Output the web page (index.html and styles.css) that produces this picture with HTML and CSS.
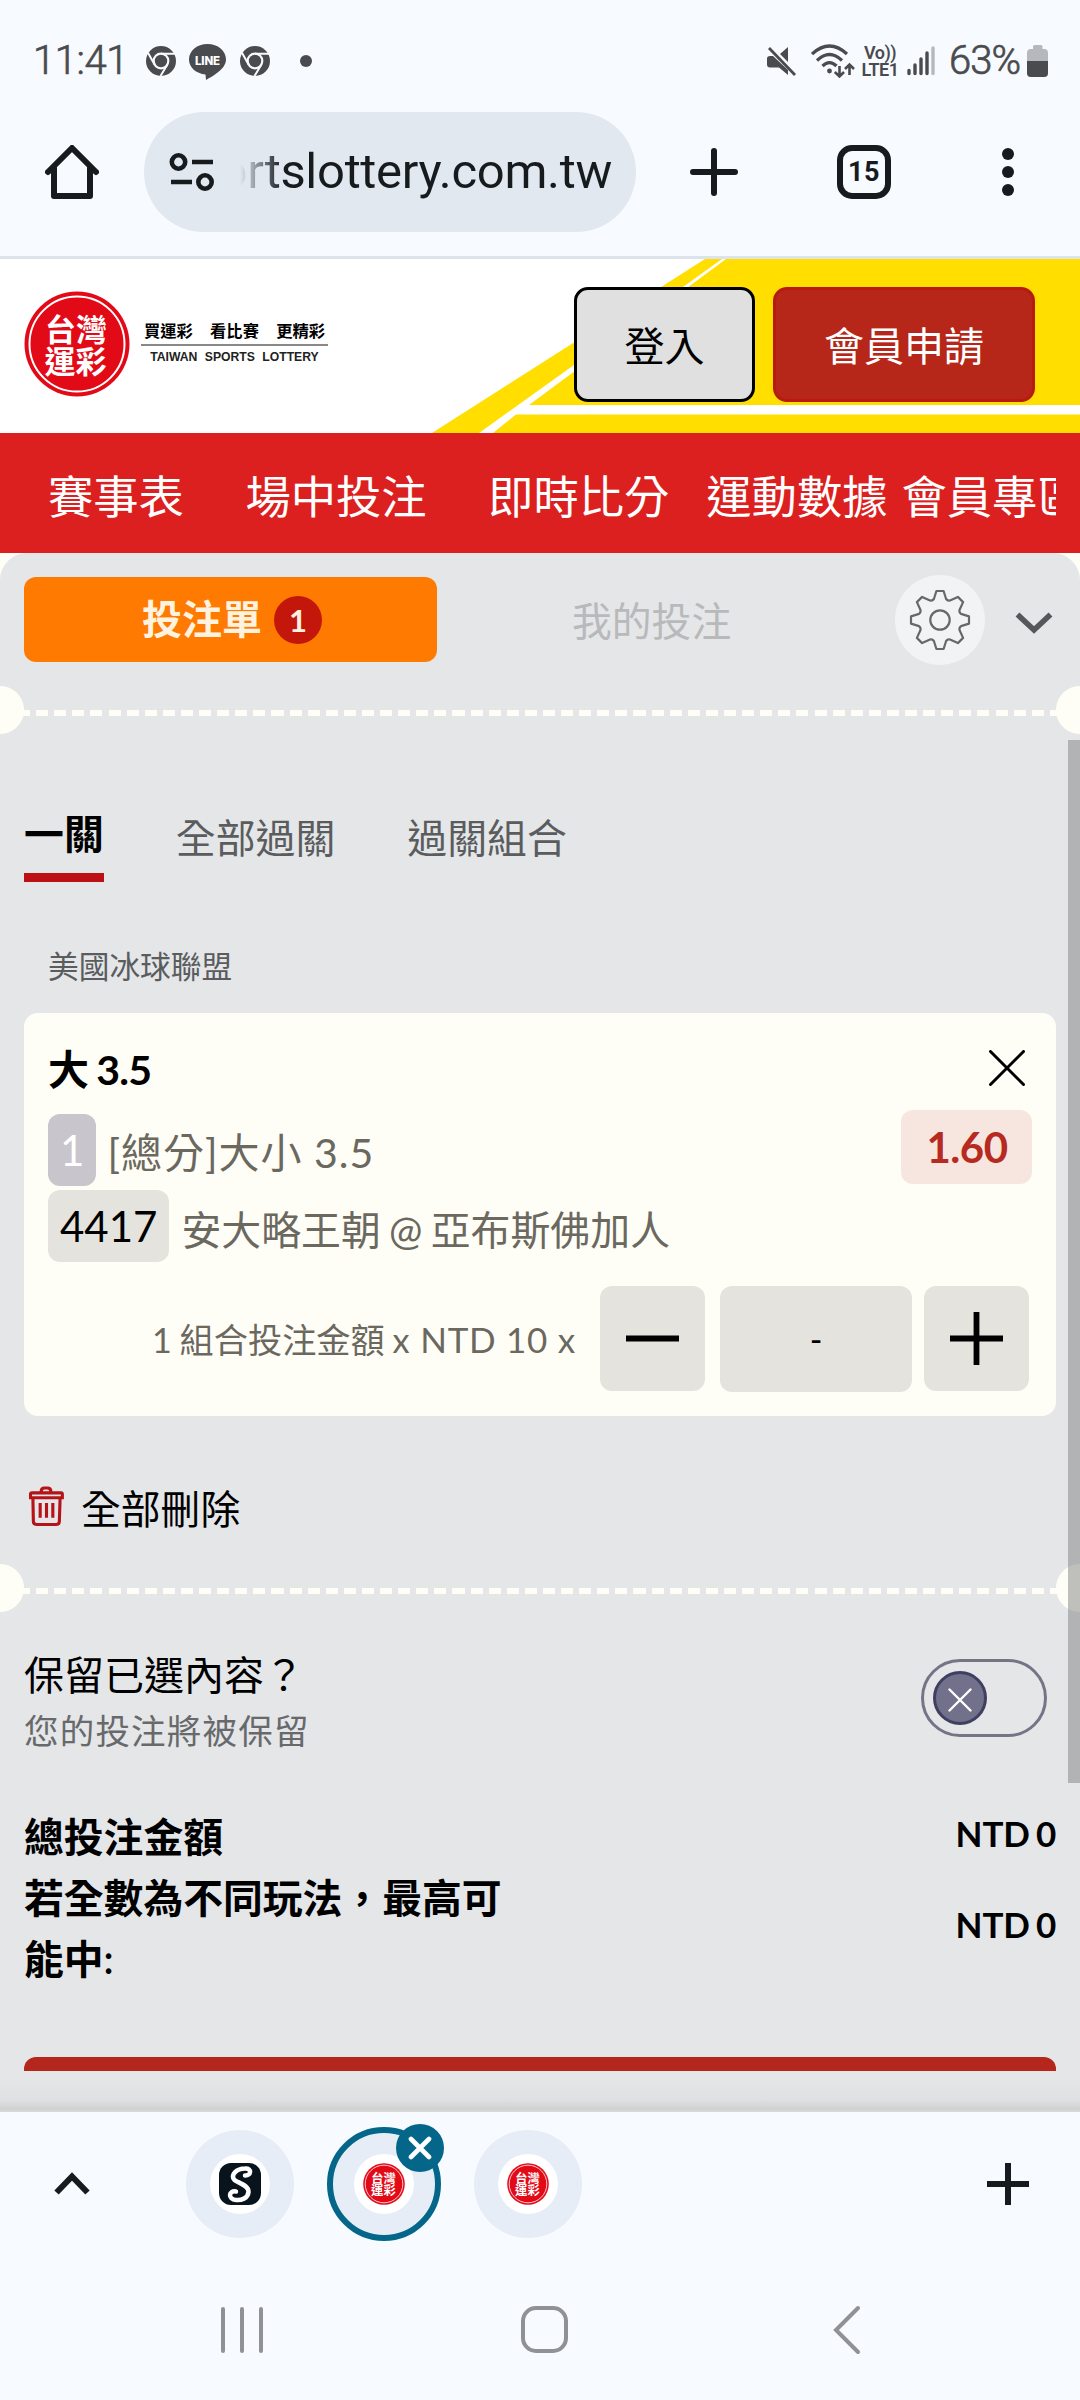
FILE: index.html
```html
<!DOCTYPE html>
<html lang="zh-Hant">
<head>
<meta charset="utf-8">
<title>台灣運彩</title>
<link rel="stylesheet" href="styles.css">
</head>
<body>
<svg class="defs" width="0" height="0" aria-hidden="true">
  <symbol id="chrome" viewBox="0 0 30 30">
    <circle cx="15" cy="15" r="15" fill="#4a4b4e"/>
    <circle cx="15" cy="15" r="8.4" fill="#f7faff"/>
    <circle cx="15" cy="15" r="6.2" fill="#4a4b4e"/>
    <path d="M15 7.7H29M8.7 18.7L1.8 6.500M21.3 18.7L14.5 30" stroke="#f7faff" stroke-width="2" fill="none"/>
  </symbol>
  <symbol id="seal" viewBox="0 0 106 106">
    <circle cx="53" cy="53" r="52.5" fill="#e30a17"/>
    <circle cx="53" cy="53" r="47.5" fill="none" stroke="#fff" stroke-width="2"/>
    <g fill="#fff" font-size="31" font-weight="700" font-family="'Noto Sans CJK TC',sans-serif">
      <text x="21" y="50">台灣</text>
      <text x="20.500" y="82">運彩</text>
    </g>
  </symbol>
</svg>

<header class="status">
  <span class="clock">11:41</span>
  <svg class="s-chrome" width="30" height="30"><use href="#chrome"/></svg>
  <svg class="s-line" width="37" height="36" viewBox="0 0 37 36">
    <path d="M18.5 0C8 0 0 6.800 0 15.500C0 23.500 7 29.500 16.500 30.500L17 36C24 32 37 25 37 15.500C37 6.800 29 0 18.500 0Z" fill="#4a4b4e"/>
    <text x="18.500" y="20.500" text-anchor="middle" font-family="Inter,sans-serif" font-weight="800" font-size="11.500" fill="#fff" textLength="25">LINE</text>
  </svg>
  <svg class="s-chrome2" width="30" height="30"><use href="#chrome"/></svg>
  <i class="s-dot"></i>
  <div class="s-right">
    <svg width="30" height="31" viewBox="0 0 30 31">
      <path d="M0 12.500Q0 10 3 10H6L21 24V29L12 21.500H3Q0 21.500 0 18.500ZM21 1V16L13 8Z" fill="#4a4b4e"/>
      <path d="M2 2L28 29" stroke="#4a4b4e" stroke-width="2.800"/>
    </svg>
    <svg class="s-wifi" width="44" height="35" viewBox="0 0 44 35">
      <g fill="none" stroke="#4a4b4e" stroke-width="3.200"><path d="M1 10Q18.500-6 36 10M6 16.500Q18.500 4.500 31 16.500M11.500 22Q18.500 15 25.500 22"/><path d="M28.500 22V32M23.800 28L28.500 32.500L33 28M38.500 31V21M34 25L38.500 20.500L43 25" stroke-width="2.600"/></g>
      <circle cx="18.500" cy="27" r="2.400" fill="#4a4b4e"/>
    </svg>
    <div class="s-lte"><b>Vo))</b><b>LTE1</b></div>
    <svg class="s-signal" width="28" height="30" viewBox="0 0 28 30" stroke-width="3.400" stroke-linecap="round" stroke="#4a4b4e">
      <path d="M2 24.500V27.500M8 19V27.500M14 13V27.500M20 7V27.500"/><path d="M26 2V27.500" stroke="#b5b8bc"/>
    </svg>
    <span class="pct">63%</span>
    <svg class="s-batt" width="21" height="32" viewBox="0 0 21 32">
      <path d="M6 1.500Q6 0 7.500 0H14Q15.500 0 15.500 1.500V4H18Q21 4.500 21 8V28Q21 32 17 32H4Q0 32 0 28V8Q0 4.500 3 4H6Z" fill="#b5b8bc"/>
      <path d="M0 16H21V28Q21 32 17 32H4Q0 32 0 28Z" fill="#4a4b4e"/>
    </svg>
  </div>
</header>

<nav class="toolbar">
  <svg class="home" width="54" height="54" viewBox="0 0 54 54" fill="none" stroke="#171b1e" stroke-width="6" stroke-linecap="round" stroke-linejoin="round">
    <path d="M3 27L27 3L51 27M9 23V51H45V23"/>
  </svg>
  <div class="url">
    <svg width="46" height="40" viewBox="0 0 46 40" fill="none" stroke="#171b1e" stroke-width="4.600">
      <circle cx="9.500" cy="10" r="6.700"/><path d="M23 10H44M2 30H23"/><circle cx="36" cy="30" r="6.700"/>
    </svg>
    <div class="address"><span>sportslottery.com.tw</span></div>
  </div>
  <svg class="add" width="48" height="48" viewBox="0 0 48 48" stroke="#171b1e" stroke-width="6" stroke-linecap="round"><path d="M24 3V45M3 24H45"/></svg>
  <div class="count">15</div>
  <div class="more"><i></i><i></i><i></i></div>
</nav>

<section class="brand">
  <svg class="stripes" width="1080" height="174" viewBox="0 259 1080 174" fill="#ffde00">
    <path d="M705 259H722L479 433H432ZM726 259H1080V405H529ZM516 414.500H1080V433H493Z"/>
  </svg>
  <svg class="seal" width="106" height="106"><use href="#seal"/></svg>
  <div class="slogan">
    <p class="zh"><span>買運彩</span><span>看比賽</span><span>更精彩</span></p>
    <p class="en">TAIWAN SPORTS LOTTERY</p>
  </div>
  <a class="btn login">登入</a>
  <a class="btn join">會員申請</a>
</section>

<nav class="menu"><div class="menu-in">
  <a class="m1">賽事表</a><a class="m2">場中投注</a><a class="m3">即時比分</a><a class="m4">運動數據</a><a>會員專區</a>
</div></nav>

<main class="sheet">
  <div class="slip">
    <div class="slip-tabs">
      <div class="tab-on">投注單<span class="badge">1</span></div>
      <div class="tab-off">我的投注</div>
      <div class="gear">
        <svg width="62" height="62" viewBox="-31 -31 62 62" fill="none" stroke="#666869" stroke-width="2.200" stroke-linejoin="round">
          <circle r="9.700"/>
          <path d="M-3.600-29H3.600L6.100-21Q7.500-19 10-19.500L17.900-23.100L23.100-17.900L19.500-10Q19-7.500 21-6.100L29-3.600V3.600L21 6.100Q19 7.500 19.500 10L23.100 17.900L17.900 23.100L10 19.500Q7.500 19 6.100 21L3.600 29H-3.600L-6.100 21Q-7.500 19-10 19.500L-17.900 23.100L-23.100 17.900L-19.500 10Q-19 7.500-21 6.100L-29 3.600V-3.600L-21-6.100Q-19-7.500-19.500-10L-23.100-17.900L-17.900-23.100L-10-19.500Q-7.500-19-6.100-21Z"/>
        </svg>
      </div>
      <svg class="fold" width="38" height="24" viewBox="0 0 38 24" fill="none" stroke="#55575a" stroke-width="5.600"><path d="M2.500 2.500L19 18L35.500 2.500"/></svg>
    </div>
    <div class="tear"></div>

    <div class="scroll">
      <div class="modes"><span class="on">一關</span><span>全部過關</span><span>過關組合</span></div>
      <p class="league">美國冰球聯盟</p>
      <article class="card">
        <div class="row pick"><h3>大 3.5</h3>
          <svg width="36" height="36" viewBox="0 0 36 36" stroke="#000" stroke-width="3" stroke-linecap="round"><path d="M1.500 1.500L34.500 34.500M34.500 1.500L1.500 34.500"/></svg></div>
        <div class="row market"><span class="tag grey">1</span><span class="desc">[總分]大小 3.5</span><b class="odds">1.60</b></div>
        <div class="row match"><span class="tag">4417</span><span class="teams">安大略王朝 @ 亞布斯佛加人</span></div>
        <div class="row stake">
          <span class="unit">1 組合投注金額 x <em>NTD 10 x</em></span>
          <span class="step"><svg width="53" height="53" viewBox="0 0 53 53" stroke="#000" stroke-width="5.800"><path d="M0 26.500H53"/></svg></span>
          <span class="amount">-</span>
          <span class="step"><svg width="53" height="53" viewBox="0 0 53 53" stroke="#000" stroke-width="5.800"><path d="M0 26.500H53M26.500 0V53"/></svg></span>
        </div>
      </article>
      <div class="clear">
        <svg width="35" height="41" viewBox="0 0 36 41" fill="none" stroke="#b51317" stroke-width="3.200">
          <path d="M12.500 6V5Q12.500 1.500 16 1.500H19Q22.500 1.500 22.500 5V6M3 6.500H33Q34.300 6.500 34.300 8V11.500H1.500V8Q1.500 6.500 3 6.500ZM4 11.500L4.500 36Q4.700 39 8 39H28Q31 39 31.200 36L32 11.500M11.500 17V32M18 17V32M24.500 17V32"/>
        </svg>
        <span>全部刪除</span>
      </div>
      <div class="tear"></div>
      <div class="keep">
        <div><p class="q">保留已選內容？</p><p class="hint">您的投注將被保留</p></div>
        <div class="switch"><i><svg width="24" height="24" viewBox="0 0 24 24" stroke="#fff" stroke-width="2.400" stroke-linecap="round"><path d="M1.500 1.500L22.500 22.500M22.500 1.500L1.500 22.500"/></svg></i></div>
      </div>
      <div class="sum"><span>總投注金額</span><b>NTD 0</b></div>
      <div class="sum win"><span>若全數為不同玩法，最高可能中:</span><b>NTD 0</b></div>
      <div class="submit"></div>
      <div class="thumb"></div>
    </div>
    <div class="shade"></div>
  </div>
</main>

<footer class="bottom">
  <svg class="up" width="36" height="24" viewBox="0 0 36 24" fill="none" stroke="#171b1e" stroke-width="6"><path d="M2.500 20.500L18 4.500L33.500 20.500"/></svg>
  <div class="chip c1"><div class="disc">
    <svg width="42" height="42" viewBox="0 0 42 42"><rect width="42" height="42" rx="12" fill="#08131c"/>
      <path d="M26 12.500C32 13 33.500 5 26 5.500C17.500 5.500 11 12 15.500 17C19 20 30 22 29.500 29C29 35.500 22 37.500 17 37C8.500 36 9.500 27 17 28.500" fill="none" stroke="#fff" stroke-width="4.500" stroke-linecap="round"/></svg></div></div>
  <div class="chip c2"><div class="disc"><svg width="42" height="42"><use href="#seal"/></svg></div>
    <i class="close"><svg width="24" height="24" viewBox="0 0 24 24" stroke="#fff" stroke-width="4.600" stroke-linecap="round"><path d="M3 3L21 21M21 3L3 21"/></svg></i></div>
  <div class="chip c3"><div class="disc"><svg width="42" height="42"><use href="#seal"/></svg></div></div>
  <svg class="new" width="42" height="42" viewBox="0 0 42 42" stroke="#171b1e" stroke-width="6"><path d="M21 0V42M0 21H42"/></svg>
</footer>
<nav class="system">
  <svg width="42" height="48" viewBox="0 0 42 48" stroke="#8f9194" stroke-width="4" stroke-linecap="round"><path d="M2 3V45M21 3V45M40 3V45"/></svg>
  <i class="sys-home"></i>
  <svg width="28" height="50" viewBox="0 0 28 50" fill="none" stroke="#8f9194" stroke-width="4" stroke-linecap="round"><path d="M25 3L3 25L25 47"/></svg>
</nav>
</body>
</html>
```
FILE: styles.css
```css
* { box-sizing: border-box; margin: 0; padding: 0; }
i, em { font-style: normal; }
svg { display: block; flex: none; }
body {
  width: 1080px; height: 2400px; overflow: hidden;
  display: flex; flex-direction: column;
  background: #f7faff;
  font-family: Lato, "Noto Sans CJK TC", sans-serif;
  color: #000;
}
.defs { position: absolute; }

/* status bar */
.status { height: 112px; padding: 41px 32px 31px 33px; display: flex; align-items: center; color: #4a4b4e; font-family: Roboto, sans-serif; }
.clock { width: 113px; font-size: 40px; line-height: 40px; font-weight: 300; -webkit-text-stroke: .7px #4a4b4e; letter-spacing: -.4px; }
.s-line { margin: 1px 14px 0 13px; }
.s-dot { width: 12px; height: 12px; border-radius: 50%; background: #4a4b4e; margin-left: 30px; }
.s-right { margin-left: auto; display: flex; align-items: center; }
.s-wifi { margin-left: 14px; }
.s-lte { width: 42px; margin-left: 4px; display: flex; flex-direction: column; font-size: 18px; line-height: 17px; align-items: center; letter-spacing: -.5px; }
.s-lte b { font-weight: 600; }
.s-signal { margin-left: 6px; }
.pct { margin-left: 14px; width: 73px; font-size: 40px; line-height: 40px; font-weight: 300; -webkit-text-stroke: .7px #4a4b4e; letter-spacing: -1px; }
.s-batt { margin-left: 5px; }

/* browser toolbar */
.toolbar { height: 147px; padding: 0 66px 24px 45px; border-bottom: 3px solid #dce3ea; display: flex; align-items: center; }
.url { width: 492px; height: 120px; margin-left: 45px; border-radius: 60px; background: #e2e8f0; display: flex; align-items: center; padding: 0 24px 0 25px; }
.address { margin-left: 25px; width: 372px; overflow: hidden; display: flex; justify-content: flex-end; font-family: Roboto, sans-serif; font-size: 49px; line-height: 64px; letter-spacing: -.3px; color: #171b1e; -webkit-mask-image: linear-gradient(90deg, transparent, #000 42px); mask-image: linear-gradient(90deg, transparent, #000 42px); }
.add { margin-left: 54px; }
.count { width: 54px; height: 54px; margin-left: 99px; border: 6px solid #171b1e; border-radius: 15px; text-align: center; font: 700 27px/43px Roboto, sans-serif; letter-spacing: .5px; color: #171b1e; }
.more { margin-left: auto; width: 12px; display: flex; flex-direction: column; gap: 6px; }
.more i { width: 12px; height: 12px; border-radius: 50%; background: #171b1e; }

/* brand header */
.brand { height: 174px; background: #fff; position: relative; display: flex; align-items: flex-start; padding-left: 24px; }
.stripes { position: absolute; left: 0; top: 0; }
.seal { margin-top: 32px; position: relative; }
.slogan { width: 187px; margin: 58px 0 0 11px; }
.zh { display: flex; justify-content: space-between; padding: 0 3px; height: 29px; border-bottom: 2px solid #888; font-size: 16.300px; line-height: 27px; font-weight: 700; }
.en { text-align: center; font: 700 12.200px/20px "Liberation Sans", sans-serif; word-spacing: 4px; color: #222; white-space: nowrap; padding-top: 1px; }
.btn { position: relative; height: 115px; margin-top: 28px; border-radius: 14px; font-size: 40px; line-height: 113px; text-align: center; }
.login { width: 181px; margin-left: 246px; border: 3px solid #000; background: #e0e0e0; }
.join { width: 262px; margin-left: 18px; border: 3px solid #b81a0e; background: #b62619; color: #fff; }

.menu { height: 120px; background: #dc1f1f; padding: 0 24px; }
.menu-in { height: 120px; padding-left: 24px; overflow: hidden; display: flex; color: #fff; font-size: 45.300px; line-height: 128px; white-space: nowrap; }
.m1, .m2 { margin-right: 61.500px; }
.m3 { margin-right: 37px; }
.m4 { margin-right: 14px; }

/* bet slip */
.sheet { height: 1559px; background: #fffef6; }
.slip { height: 1559px; background: #e4e6e8; border-radius: 27px 27px 0 0; overflow: hidden; }
.slip-tabs { height: 133px; padding: 22px 0 0 24px; display: flex; align-items: flex-start; }
.slip-tabs > * { flex: none; }
.tab-on { width: 413px; height: 85px; margin-top: 2px; border-radius: 12px; background: #ff7a00; color: #fff3e0; font-size: 40px; font-weight: 600; display: flex; align-items: center; justify-content: center; gap: 12px; padding-left: 3px; line-height: 89px; }
.badge { width: 48px; height: 48px; border-radius: 50%; background: #c4170c; font-size: 31px; font-weight: 700; line-height: 48px; text-align: center; }
.tab-off { margin-left: 135px; width: 160px; font-size: 39.800px; line-height: 92px; color: #b7b9bb; white-space: nowrap; }
.gear { width: 90px; height: 90px; margin-left: 163px; border-radius: 50%; background: #f1f3f5; display: grid; place-items: center; }
.fold { margin-left: 30px; margin-top: 37px; }

.tear { height: 48px; background:
  radial-gradient(circle at 0 50%, #fffef6 23.500px, transparent 24.500px),
  radial-gradient(circle at 100% 50%, #fffef6 23.500px, transparent 24.500px),
  repeating-linear-gradient(90deg, #fffef6 0 12px, transparent 12px 18.100px) 0 24px / 100% 6px no-repeat; }

.scroll { height: 1338px; position: relative; overflow: hidden; }
.thumb { position: absolute; right: 0; top: 6px; width: 12px; height: 1043px; background: rgba(128, 128, 128, .5); }
.modes { height: 148px; padding: 70px 24px 0; display: flex; gap: 72px; font-size: 39.900px; line-height: 68px; color: #5a5c5e; }
.modes .on { height: 78px; line-height: 59px; border-bottom: 9px solid #bc1014; color: #000; font-weight: 600; }
.league { height: 131px; padding: 54px 48px 0; font-size: 30.700px; line-height: 62px; color: #5a5c5e; }

.card { height: 403px; margin: 0 24px; padding: 18px 24px 0; border-radius: 14px; background: #fffef6; }
.row { display: flex; }
.pick { height: 79px; justify-content: space-between; }
.pick svg { margin: 19px 7px 0; }
.pick h3 { font-size: 41px; line-height: 77px; font-weight: 700; white-space: pre; letter-spacing: -.8px; word-spacing: -1px; }
.market { height: 80px; color: #6b6860; font-size: 41px; }
.tag { height: 72px; margin-top: 4px; padding: 0 12px; border-radius: 12px; background: #e5e3dd; color: #000; font-size: 42px; line-height: 72px; }
.grey { background: #c8c6cc; color: #fff; }
.desc { margin-left: 11px; line-height: 85px; letter-spacing: 1px; }
.odds { margin-left: auto; width: 131px; height: 74px; padding-left: 1px; border-radius: 12px; background: #f7e6df; color: #b62a20; font-size: 42px; line-height: 74px; text-align: center; letter-spacing: -.5px; }
.match { height: 96px; color: #6b6860; font-size: 39.900px; }
.match .tag { margin-top: 0; }
.teams { margin-left: 12px; line-height: 79px; white-space: pre; word-spacing: -2px; }
.stake { height: 106px; font-size: 34.200px; color: #6b6860; }
.unit { width: 448px; margin-left: 104px; line-height: 107px; white-space: nowrap; word-spacing: -1px; }
.unit em { margin-left: 3px; font-size: 35px; letter-spacing: .7px; word-spacing: 0; }
.step { width: 105px; height: 105px; border-radius: 12px; background: #e5e3dd; display: grid; place-items: center; }
.amount { width: 192px; height: 106px; margin: 0 12px 0 15px; border-radius: 12px; background: #e5e3dd; color: #000; text-align: center; line-height: 106px; }

.clear { height: 148px; padding: 70px 29px 0; display: flex; gap: 17px; }
.clear span { font-size: 39.800px; line-height: 46px; }

.keep { height: 194px; padding: 34px 33px 0 24px; display: flex; justify-content: space-between; }
.q { font-size: 40px; line-height: 58px; }
.hint { font-size: 34.500px; line-height: 54px; letter-spacing: 1.200px; color: #68696b; }
.switch { width: 126px; height: 78px; margin-top: 13px; border: 3px solid #747487; border-radius: 39px; padding: 9px; }
.switch i { width: 54px; height: 54px; border-radius: 50%; border: 3px solid #3f3f60; background: #71718c; display: grid; place-items: center; padding-top: 4px; }
.sum { height: 61px; margin: 0 24px; display: flex; justify-content: space-between; align-items: center; font-size: 39.800px; line-height: 61px; font-weight: 600; }
.sum span { width: 490px; }
.sum b { font-size: 35px; font-weight: 700; word-spacing: -2px; letter-spacing: -.2px; padding-bottom: 7px; }
.win { height: 122px; }
.submit { height: 14px; margin: 68px 24px 0; border-radius: 12px 12px 0 0; background: #b5261c; }
.shade { height: 40px; background: linear-gradient(#e4e6e8 20%, #dfe0e2 70%, #cfd1d1 93%, #d8dad9); }

/* tab strip */
.bottom { height: 144px; padding: 0 51px 0 54px; display: flex; align-items: center; }
.chip { width: 108px; height: 108px; border-radius: 50%; background: #e7edf6; display: grid; place-items: center; position: relative; }
.disc { width: 60px; height: 60px; border-radius: 50%; background: #fff; display: grid; place-items: center; }
.c1 { margin-left: 96px; }
.c2 { width: 114px; height: 114px; margin-left: 33px; border: 6px solid #04678a; }
.c3 { margin-left: 33px; }
.close { position: absolute; right: -9px; top: -9px; width: 48px; height: 48px; border-radius: 50%; background: #04678a; display: grid; place-items: center; }
.new { margin-left: auto; }

.system { height: 144px; padding: 3px 219px 0 221px; display: flex; align-items: center; }
.sys-home { width: 47px; height: 47px; border: 4px solid #8f9194; border-radius: 15px; margin: 0 auto 0 258px; }
```
